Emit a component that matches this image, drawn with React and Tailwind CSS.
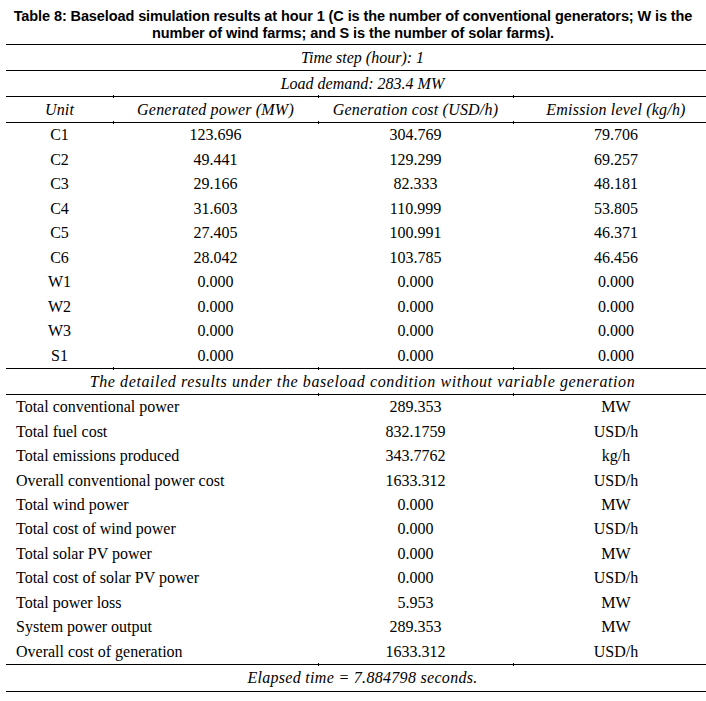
const units = [
  ["C1", "123.696", "304.769", "79.706"],
  ["C2", "49.441", "129.299", "69.257"],
  ["C3", "29.166", "82.333", "48.181"],
  ["C4", "31.603", "110.999", "53.805"],
  ["C5", "27.405", "100.991", "46.371"],
  ["C6", "28.042", "103.785", "46.456"],
  ["W1", "0.000", "0.000", "0.000"],
  ["W2", "0.000", "0.000", "0.000"],
  ["W3", "0.000", "0.000", "0.000"],
  ["S1", "0.000", "0.000", "0.000"],
];

const totals = [
  ["Total conventional power", "289.353", "MW"],
  ["Total fuel cost", "832.1759", "USD/h"],
  ["Total emissions produced", "343.7762", "kg/h"],
  ["Overall conventional power cost", "1633.312", "USD/h"],
  ["Total wind power", "0.000", "MW"],
  ["Total cost of wind power", "0.000", "USD/h"],
  ["Total solar PV power", "0.000", "MW"],
  ["Total cost of solar PV power", "0.000", "USD/h"],
  ["Total power loss", "5.953", "MW"],
  ["System power output", "289.353", "MW"],
  ["Overall cost of generation", "1633.312", "USD/h"],
];

// thin rule with the little column ticks left over from the cell borders
const Rule = ({ first, rest }) => (
  <div className="relative h-px bg-black">
    {first && <span className="absolute left-[107px] -top-px h-[3px] w-px bg-black" />}
    {rest && (
      <>
        <span className="absolute left-[312px] -top-px h-[3px] w-px bg-black" />
        <span className="absolute left-[507px] -top-px h-[3px] w-px bg-black" />
      </>
    )}
  </div>
);

const App = () => {
  return (
    <div className="w-[706px] h-[701px] overflow-hidden bg-white text-black">
      <h1 className="pt-[8px] text-center font-['Liberation_Sans',Arial,sans-serif] font-bold text-[14.5px] leading-[17px] tracking-[-0.1px] whitespace-nowrap">
        Table 8: Baseload simulation results at hour 1 (C is the number of conventional generators; W is the
        <br />
        number of wind farms; and S is the number of solar farms).
      </h1>

      <div className="ml-[6px] mt-[2px] w-[713px] font-['Liberation_Serif','Times_New_Roman',serif] text-[16px]">
        <Rule />
        <div className="h-[25px] flex items-center justify-center italic">Time step (hour): 1</div>
        <Rule />
        <div className="h-[25px] flex items-center justify-center italic">Load demand: 283.4 MW</div>
        <Rule first rest />
        <div className="grid grid-cols-[107px_205px_195px_206px] h-[25px] items-center text-center italic tracking-[0.2px]">
          <div>Unit</div>
          <div>Generated power (MW)</div>
          <div>Generation cost (USD/h)</div>
          <div>Emission level (kg/h)</div>
        </div>
        <Rule first rest />

        {units.map((r) => (
          <div
            key={r[0]}
            className="grid grid-cols-[107px_205px_195px_206px] h-[24.5px] items-center text-center"
          >
            <div>{r[0]}</div>
            <div>{r[1]}</div>
            <div>{r[2]}</div>
            <div>{r[3]}</div>
          </div>
        ))}

        <Rule first rest />
        <div className="h-[25px] flex items-center justify-center italic tracking-[0.6px]">
          The detailed results under the baseload condition without variable generation
        </div>
        <Rule rest />

        {totals.map((r) => (
          <div
            key={r[0]}
            className="grid grid-cols-[312px_195px_206px] h-[24.45px] items-center"
          >
            <div className="pl-[10px]">{r[0]}</div>
            <div className="text-center">{r[1]}</div>
            <div className="text-center">{r[2]}</div>
          </div>
        ))}

        <Rule rest />
        <div className="h-[26px] flex items-center justify-center italic tracking-[0.3px]">
          Elapsed time = 7.884798 seconds.
        </div>
        <Rule />
      </div>
    </div>
  );
};

export default App;
